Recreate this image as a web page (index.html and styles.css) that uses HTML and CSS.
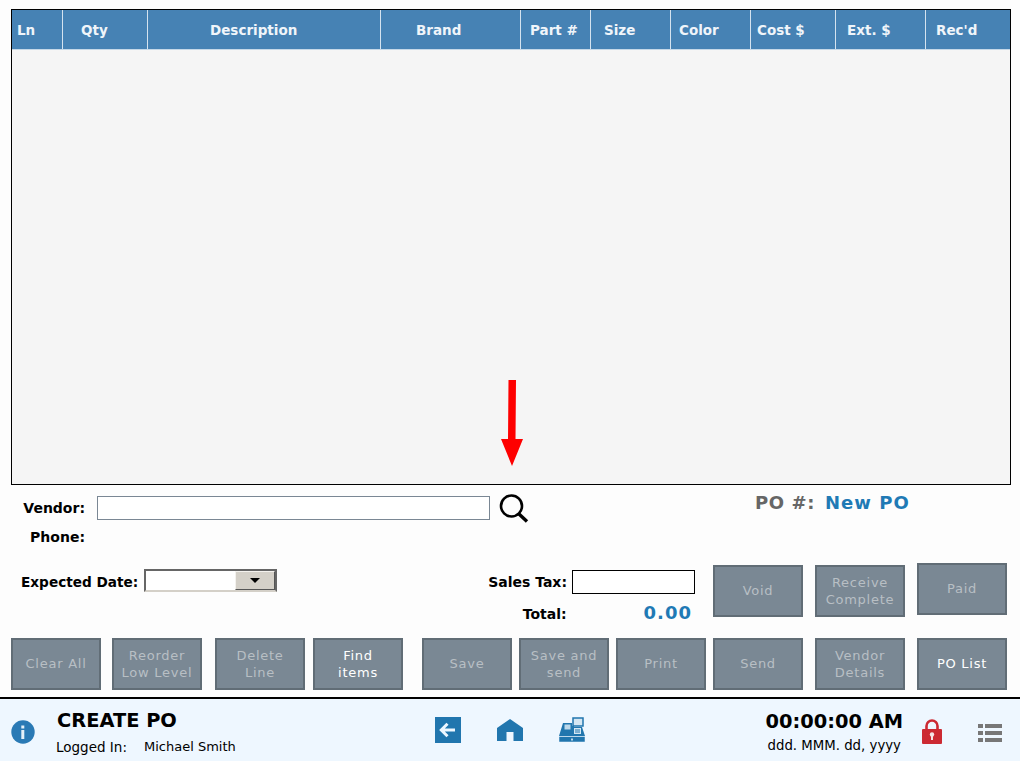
FILE: index.html
```html
<!DOCTYPE html>
<html lang="en">
<head>
<meta charset="utf-8">
<title>Create PO</title>
<link rel="stylesheet" href="styles.css">
</head>
<body>
<div class="page">
  <section class="lines">
    <div class="lines-head">
      <div class="col ln">Ln</div>
      <div class="col qty">Qty</div>
      <div class="col desc">Description</div>
      <div class="col brand">Brand</div>
      <div class="col part">Part #</div>
      <div class="col size">Size</div>
      <div class="col color">Color</div>
      <div class="col cost">Cost $</div>
      <div class="col ext">Ext. $</div>
      <div class="col recd">Rec'd</div>
    </div>
    <svg class="arrow" width="22" height="87" viewBox="0 0 22 87"><path d="M7.500 0h7.500l-.5 59H22L11 86 0 59h7z" fill="#fe0000"/></svg>
  </section>

  <section class="vendor-row">
    <div class="vendor-block">
      <div class="field">
        <span class="label vendor-label">Vendor:</span>
        <span class="vendor-input"></span>
        <svg class="search" width="32" height="32" viewBox="0 0 32 32"><circle cx="13.500" cy="13" r="10.500" fill="none" stroke="#000" stroke-width="2.600"/><path d="M21 21l8 7.500" stroke="#000" stroke-width="3.400" fill="none"/></svg>
      </div>
      <div class="field phone">
        <span class="label vendor-label">Phone:</span>
      </div>
    </div>
    <div class="po-number"><span class="po-label">PO #:</span><span class="po-value">New PO</span></div>
  </section>

  <section class="mid-row">
    <div class="date-field">
      <span class="label date-label">Expected Date:</span>
      <span class="date-input"><span class="date-button"><i class="caret"></i></span></span>
    </div>
    <div class="totals">
      <div class="tax"><span class="label">Sales Tax:</span><span class="tax-input"></span></div>
      <div class="total"><span class="label">Total:</span><span class="total-value">0.00</span></div>
    </div>
    <div class="mid-actions">
      <button class="btn off">Void</button>
      <button class="btn off">Receive<br>Complete</button>
      <button class="btn off raised">Paid</button>
    </div>
  </section>

  <section class="actions">
    <button class="btn off">Clear All</button>
    <button class="btn off">Reorder<br>Low Level</button>
    <button class="btn off">Delete<br>Line</button>
    <button class="btn">Find<br>items</button>
    <button class="btn off">Save</button>
    <button class="btn off">Save and<br>send</button>
    <button class="btn off">Print</button>
    <button class="btn off">Send</button>
    <button class="btn off">Vendor<br>Details</button>
    <button class="btn">PO List</button>
  </section>

  <footer class="footer">
    <div class="foot-left">
      <svg class="info" width="24" height="24" viewBox="0 0 24 24"><circle cx="12" cy="12" r="11.700" fill="#2a7ab5"/><rect x="10.300" y="10" width="3" height="9" fill="#e4f0f8"/><rect x="10.300" y="5.500" width="3" height="3" fill="#e4f0f8"/></svg>
      <div class="title-block">
        <div class="title">CREATE PO</div>
        <div class="login"><span class="login-label">Logged In:</span><span class="login-name">Michael Smith</span></div>
      </div>
    </div>
    <nav class="foot-nav">
      <svg width="26" height="26" viewBox="0 0 26 26"><rect width="26" height="26" fill="#2176ae"/><path d="M6 13h14M12.500 6.800L6.300 13l6.200 6.200" fill="none" stroke="#eef7ff" stroke-width="3"/></svg>
      <svg width="26" height="22" viewBox="0 0 26 22"><path d="M13 0L26 9v13h-9.500v-9h-7v9H0V9z" fill="#2176ae"/></svg>
      <svg width="26" height="26" viewBox="0 0 26 26"><path d="M14 1h10v8H14z" fill="#d5e7f3" stroke="#2176ae" stroke-width="1.500"/><path d="M4 6h9v3h2v1h8l3 9H0z" fill="#2176ae"/><path d="M5.500 7.500h6v5h-6z" fill="#bcd8ea"/><path d="M15 11h7v6h-7z" fill="#d5e7f3"/><path d="M16 13h5M16 15h5" stroke="#2176ae"/><path d="M0 19.500h26v5.500H0z" fill="#2176ae" stroke="#eef7ff" stroke-width=".5"/><path d="M12 21.500h2v2h-2z" fill="#bcd8ea"/></svg>
    </nav>
    <div class="foot-right">
      <div class="clock">
        <div class="time">00:00:00 AM</div>
        <div class="date">ddd. MMM. dd, yyyy</div>
      </div>
      <svg class="lock" width="20" height="25" viewBox="0 0 20 25"><path d="M4.500 11V7a5.500 5.500 0 0 1 11 0v4" fill="none" stroke="#cc2a33" stroke-width="2.600"/><rect y="10" width="20" height="15" rx="1" fill="#cc2a33"/><circle cx="10" cy="15.500" r="2.200" fill="#f4e6e8"/><rect x="9" y="16" width="2" height="5" fill="#f4e6e8"/></svg>
      <svg class="menu" width="24" height="18" viewBox="0 0 24 18"><path d="M0 0h5v4H0zM7 0h17v4H7zM0 7h5v4H0zM7 7h17v4H7zM0 14h5v4H0zM7 14h17v4H7z" fill="#777"/></svg>
    </div>
  </footer>
</div>
</body>
</html>
```
FILE: styles.css
```css
* { box-sizing: border-box; }
html, body { margin: 0; padding: 0; }
body { background: #fdfdfd; font-family: "DejaVu Sans", Verdana, sans-serif; color: #000; }
.page { width: 1020px; height: 761px; display: flex; flex-direction: column; overflow: hidden; }

.lines { position: relative; height: 476px; margin: 9px 9px 0 11px; border: 1px solid #000; background: #f5f5f5; }
.lines-head {
  display: grid;
  grid-template-columns: 50px 85px 233px 140px 70px 80px 80px 85px 90px 1fr;
  height: 40px; background: #4682b4; border-bottom: 1px solid #c5d8e8;
}
.col { display: flex; align-items: center; justify-content: flex-start; border-left: 1px solid #d5e3ef; color: #f0f5fa; font-size: 13.500px; font-weight: 700; white-space: nowrap; }
.ln { border-left: 0; padding-left: 5px; }
.qty { padding-left: 18px; }
.desc { padding-left: 62px; }
.brand { padding-left: 35px; }
.part { padding-left: 9px; }
.size { padding-left: 13px; }
.color { padding-left: 8px; }
.cost { padding-left: 6px; }
.ext { padding-left: 11px; }
.recd { padding-left: 10px; }
.arrow { position: absolute; left: 489px; top: 370px; }

.label { font-size: 14px; font-weight: 700; color: #000; white-space: nowrap; }

.vendor-row { display: flex; height: 78px; }
.vendor-block { width: 713px; padding: 11px 0 0 22px; }
.field { display: flex; align-items: center; height: 24px; }
.phone { margin-top: 7px; height: 20px; }
.vendor-label { width: 63px; text-align: right; }
.vendor-input { width: 393px; height: 24px; margin-left: 12px; border: 1px solid #7a8794; background: #fff; }
.search { margin-left: 8px; margin-top: 2px; }
.po-number { display: flex; gap: 10px; padding: 7px 0 0 42px; height: 30px; font-size: 18px; font-weight: 700; }
.po-label { color: #666; letter-spacing: 0.6px; }
.po-value { color: #1f7ab5; letter-spacing: 1px; }

.mid-row { display: flex; height: 75px; }
.date-field { display: flex; align-items: center; gap: 6px; width: 278px; height: 23px; margin-top: 6px; padding-left: 21px; }
.date-label { width: 117px; font-size: 13.650px; padding-top: 2px; }
.date-input { display: flex; justify-content: flex-end; width: 133px; height: 23px; background: #fff; border: 2px solid; border-color: #666 #666 #d4d0c8 #666; }
.date-button { display: flex; align-items: center; justify-content: center; width: 40px; background: #d4d0c8; border: 1px solid; border-color: #f4f2ee #555 #555 #f4f2ee; }
.caret { width: 0; height: 0; border-left: 5px solid transparent; border-right: 5px solid transparent; border-top: 5px solid #000; }

.totals { width: 435px; }
.tax { display: flex; align-items: center; justify-content: flex-end; gap: 5px; width: 417px; height: 24px; margin-top: 7px; }
.tax-input { width: 123px; height: 24px; border: 1px solid #000; background: #fff; }
.total { display: flex; align-items: center; width: 414px; height: 26px; margin-top: 5px; justify-content: flex-end; }
.total .label { margin-right: 77px; padding-top: 3px; }
.total-value { font-size: 18px; font-weight: 700; color: #1f7ab5; letter-spacing: 1px; }

.mid-actions { display: flex; align-items: flex-start; gap: 12px; padding-top: 2px; }
.raised { margin-top: -2px; }

.actions { display: flex; padding-left: 11px; }
.actions .btn:nth-child(2) { margin-left: 11px; }
.actions .btn:nth-child(3) { margin-left: 13px; }
.actions .btn:nth-child(4) { margin-left: 8px; }
.actions .btn:nth-child(5) { margin-left: 19px; }
.actions .btn:nth-child(6),
.actions .btn:nth-child(7),
.actions .btn:nth-child(8) { margin-left: 7px; }
.actions .btn:nth-child(9),
.actions .btn:nth-child(10) { margin-left: 12px; }

.btn {
  flex: none; width: 90px; height: 52px; padding: 0 0 1px;
  background: #7a8894; border: 2px solid #616d76; border-radius: 0;
  color: #fff; font-family: inherit; font-size: 13px; line-height: 17px; letter-spacing: 0.75px;
}
.btn.off { color: #b8bfc4; }

.footer { display: flex; align-items: stretch; height: 64px; margin-top: 7px; background: #eef7ff; border-top: 2px solid #000; }
.foot-left { display: flex; width: 435px; }
.info { margin: 21px 0 0 11px; }
.title-block { margin-left: 22px; padding-top: 11px; }
.title { font-size: 19.400px; font-weight: 700; line-height: 22px; }
.login { display: flex; font-size: 13px; margin-top: 6px; line-height: 18px; }
.login-label { width: 88px; margin-left: -1px; font-size: 13.500px; }
.foot-nav { display: flex; align-items: center; gap: 36px; width: 316px; }
.foot-right { display: flex; flex: 1; }
.clock { width: 152px; padding-top: 12px; text-align: right; white-space: nowrap; }
.time { font-size: 19.400px; font-weight: 700; line-height: 22px; }
.date { font-size: 13.300px; line-height: 18px; margin-top: 4px; padding-right: 2px; }
.lock { margin: 20px 0 0 19px; }
.menu { margin: 25px 0 0 36px; }
```
